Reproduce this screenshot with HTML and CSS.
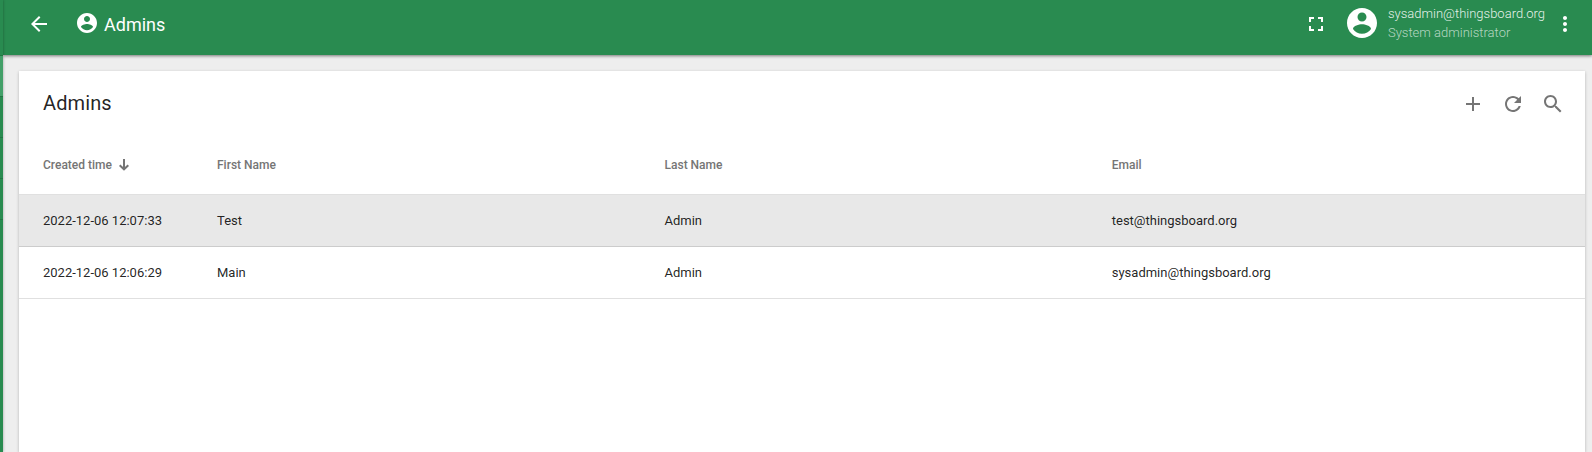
FILE: index.html
```html
<!DOCTYPE html>
<html lang="en">
<head>
<meta charset="utf-8">
<title>Admins</title>
<link rel="stylesheet" href="styles.css">
</head>
<body>
<div class="app">
  <nav class="sidenav">
    <div class="sidenav-logo"></div>
    <div class="sidenav-item active"></div>
    <div class="sidenav-item"></div>
    <div class="sidenav-item"></div>
    <div class="sidenav-item"></div>
    <div class="sidenav-rest"></div>
  </nav>
  <div class="main">
    <header class="toolbar">
      <svg class="icon back" viewBox="0 0 24 24"><path d="M20 11H7.830l5.590-5.590L12 4l-8 8 8 8 1.410-1.410L7.830 13H20v-2z"/></svg>
      <svg class="icon crumb-icon" viewBox="0 0 24 24"><path d="M12 2C6.480 2 2 6.480 2 12s4.480 10 10 10 10-4.480 10-10S17.520 2 12 2zm0 3c1.660 0 3 1.340 3 3s-1.340 3-3 3-3-1.340-3-3 1.340-3 3-3zm0 14.200c-2.500 0-4.710-1.280-6-3.220.03-1.990 4-3.080 6-3.080 1.990 0 5.970 1.090 6 3.080-1.290 1.940-3.500 3.220-6 3.220z"/></svg>
      <span class="crumb">Admins</span>
      <div class="spacer"></div>
      <svg class="icon fullscreen" viewBox="0 0 24 24"><path d="M7 14H5v5h5v-2H7v-3zm-2-4h2V7h3V5H5v5zm12 7h-3v2h5v-5h-2v3zM14 5v2h3v3h2V5h-5z"/></svg>
      <svg class="icon avatar" viewBox="0 0 24 24"><path d="M12 2C6.480 2 2 6.480 2 12s4.480 10 10 10 10-4.480 10-10S17.520 2 12 2zm0 3c1.660 0 3 1.340 3 3s-1.340 3-3 3-3-1.340-3-3 1.340-3 3-3zm0 14.200c-2.500 0-4.710-1.280-6-3.220.03-1.990 4-3.080 6-3.080 1.990 0 5.970 1.090 6 3.080-1.290 1.940-3.500 3.220-6 3.220z"/></svg>
      <div class="user">
        <span class="user-name">sysadmin@thingsboard.org</span>
        <span class="user-role">System administrator</span>
      </div>
      <svg class="icon more" viewBox="0 0 24 24"><path d="M12 8c1.100 0 2-.9 2-2s-.9-2-2-2-2 .9-2 2 .9 2 2 2zm0 2c-1.100 0-2 .9-2 2s.9 2 2 2 2-.9 2-2-.9-2-2-2zm0 6c-1.100 0-2 .9-2 2s.9 2 2 2 2-.9 2-2-.9-2-2-2z"/></svg>
    </header>
    <main class="content">
      <section class="card">
        <div class="card-head">
          <h1 class="card-title">Admins</h1>
          <div class="actions">
            <svg class="icon" viewBox="0 0 24 24"><path d="M19 13h-6v6h-2v-6H5v-2h6V5h2v6h6v2z"/></svg>
            <svg class="icon" viewBox="0 0 24 24"><path d="M17.650 6.350C16.200 4.900 14.210 4 12 4c-4.420 0-7.990 3.580-7.990 8s3.570 8 7.990 8c3.730 0 6.840-2.550 7.730-6h-2.080c-.82 2.330-3.040 4-5.650 4-3.310 0-6-2.690-6-6s2.690-6 6-6c1.660 0 3.140.69 4.220 1.780L13 11h7V4l-2.350 2.350z"/></svg>
            <svg class="icon" viewBox="0 0 24 24"><path d="M15.500 14h-.79l-.28-.27C15.410 12.590 16 11.110 16 9.500 16 5.910 13.090 3 9.500 3S3 5.910 3 9.500 5.910 16 9.500 16c1.610 0 3.090-.59 4.230-1.570l.27.28v.79l5 4.990L20.490 19l-4.990-5zm-6 0C7.010 14 5 11.990 5 9.500S7.010 5 9.500 5 14 7.010 14 9.500 11.990 14 9.500 14z"/></svg>
          </div>
        </div>
        <div class="row head">
          <div class="cell">Created time<svg class="sort" viewBox="0 0 12 12"><path d="M6 0v10M1.700 6.200L6 10.300l4.300-4.100"/></svg></div>
          <div class="cell">First Name</div>
          <div class="cell">Last Name</div>
          <div class="cell">Email</div>
        </div>
        <div class="row hovered">
          <div class="cell">2022-12-06 12:07:33</div>
          <div class="cell">Test</div>
          <div class="cell">Admin</div>
          <div class="cell">test@thingsboard.org</div>
        </div>
        <div class="row">
          <div class="cell">2022-12-06 12:06:29</div>
          <div class="cell">Main</div>
          <div class="cell">Admin</div>
          <div class="cell">sysadmin@thingsboard.org</div>
        </div>
      </section>
    </main>
  </div>
</div>
</body>
</html>
```
FILE: styles.css
```css
* { box-sizing: border-box; }
body {
  margin: 0;
  font-family: Roboto, "Liberation Sans", sans-serif;
  color: rgba(0, 0, 0, .87);
}
.app { display: flex; height: 452px; overflow: hidden; background: #eee; }
.sidenav {
  width: 3px;
  flex: none;
  display: flex;
  flex-direction: column;
  background: #298b50;
  box-shadow: 0 0 3px rgba(0, 0, 0, .35);
  z-index: 2;
}
.sidenav-logo { height: 56px; border-bottom: 1px solid #237644; }
.sidenav-item { height: 41px; border-bottom: 1px solid #237644; }
.sidenav-item.active { background: #43a069; }
.sidenav-rest { flex: 1; }
.main { flex: 1; min-width: 0; display: flex; flex-direction: column; }
.toolbar {
  height: 55px;
  flex: none;
  display: flex;
  align-items: flex-start;
  padding: 0 15px 0 24px;
  background: #298b50;
  color: #fff;
  box-shadow: 0 1px 3px rgba(0, 0, 0, .5);
  z-index: 1;
}
.icon { width: 24px; height: 24px; flex: none; display: block; fill: currentColor; }
.back { margin-top: 12px; }
.crumb-icon { margin: 11px 0 0 24px; }
.crumb { margin-left: 5px; font-size: 18px; line-height: 50px; }
.spacer { flex: 1; }
.fullscreen { margin-top: 12px; }
.avatar { width: 36px; height: 36px; margin: 5px 8px 0 16px; }
.user { display: flex; flex-direction: column; padding-top: 4px; font-weight: 300; line-height: 19px; }
.user-name { font-size: 13px; color: rgba(255, 255, 255, .9); }
.user-role { font-size: 13px; color: rgba(255, 255, 255, .66); }
.more { margin: 12px 0 0 8px; }
.content { flex: 1; padding: 16px 7px 0 16px; display: flex; }
.card { flex: 1; background: #fff; box-shadow: 0 1px 3px rgba(0, 0, 0, .24); }
.card-head { height: 64px; display: flex; justify-content: space-between; align-items: center; padding: 2px 20px 0 24px; }
.card-title { margin: 0; padding-bottom: 2px; font-size: 20px; font-weight: 400; line-height: 32px; letter-spacing: .1px; }
.actions { display: flex; gap: 16px; color: #757575; }
.row {
  display: grid;
  grid-template-columns: 174px 447.500px 447.250px 1fr;
  align-items: center;
  height: 52px;
  padding-left: 24px;
  border-bottom: 1px solid #e0e0e0;
  font-size: 13px;
}
.row.head { height: 60px; font-size: 12px; font-weight: 500; color: #757575; }
.row.hovered { background: #e8e8e8; border-bottom-color: #ccc; }
.cell { display: flex; align-items: center; }
.sort { width: 12px; height: 12px; margin-left: 6px; fill: none; stroke: currentColor; stroke-width: 2; }
```
